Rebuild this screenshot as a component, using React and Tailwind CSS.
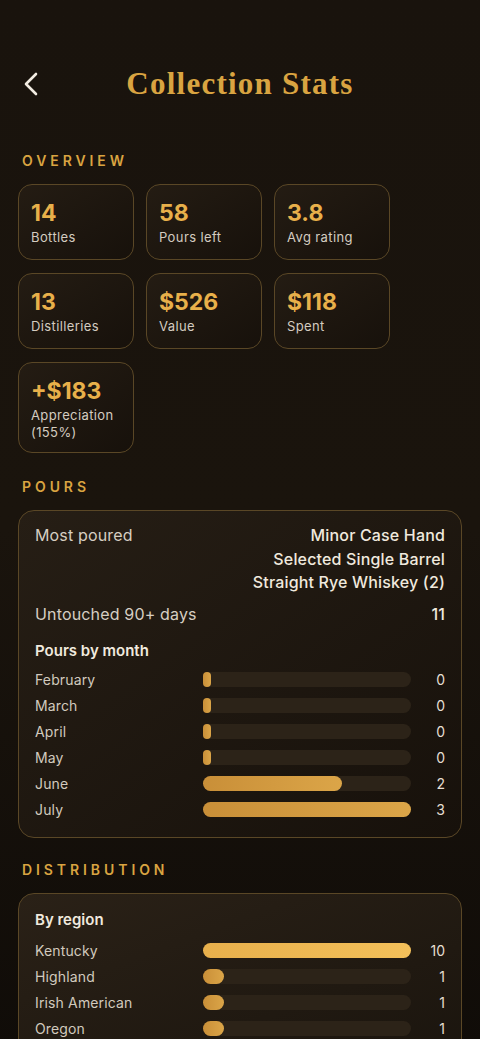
const overview = [
  { v: "14", l: "Bottles" },
  { v: "58", l: "Pours left" },
  { v: "3.8", l: "Avg rating" },
  { v: "13", l: "Distilleries" },
  { v: "$526", l: "Value" },
  { v: "$118", l: "Spent" },
  { v: "+$183", l: "Appreciation (155%)" },
];

const months = [
  { l: "February", n: 0 },
  { l: "March", n: 0 },
  { l: "April", n: 0 },
  { l: "May", n: 0 },
  { l: "June", n: 2 },
  { l: "July", n: 3 },
];

const regions = [
  { l: "Kentucky", n: 10 },
  { l: "Highland", n: 1 },
  { l: "Irish American", n: 1 },
  { l: "Oregon", n: 1 },
];

const SectionTitle = ({ children }) => (
  <div className="px-[22px] text-[14px] font-semibold tracking-[0.28em] text-[#d9a441]">{children}</div>
);

const BarRow = ({ label, n, max, bright }) => {
  const pct = Math.max((n / max) * 100, n === 0 ? 4 : 0);
  return (
    <div className="flex h-[26px] items-center">
      <div className="w-[168px] text-[14px] tracking-[0.01em] text-[#d2cabe]">{label}</div>
      <div className="h-[15px] w-[208px] rounded-full bg-[#2c2318]">
        <div
          className={
            bright
              ? "h-full rounded-full bg-gradient-to-r from-[#e8b04c] to-[#f3c05a]"
              : "h-full rounded-full bg-gradient-to-r from-[#c98f38] to-[#dba548]"
          }
          style={{ width: pct + "%" }}
        />
      </div>
      <div className="flex-1 text-right text-[14px] text-[#e6ded2]">{n}</div>
    </div>
  );
};

export default function App() {
  return (
    <div
      className="min-h-[1039px] w-[480px] overflow-hidden bg-gradient-to-b from-[#19130d] via-[#1a140d] to-[#100c08] text-white"
      style={{ fontFamily: "Inter, 'Noto Sans', sans-serif" }}
    >
      <div className="relative flex h-[108px] items-center justify-center pt-[60px]">
        <svg
          className="absolute left-[22px] top-[70px]"
          width="20"
          height="28"
          viewBox="0 0 20 28"
          fill="none"
          stroke="#f2ece2"
          strokeWidth="2.6"
          strokeLinecap="round"
          strokeLinejoin="round"
        >
          <path d="M14 4 L4 14 L14 24" />
        </svg>
        <h1
          className="text-[31px] font-bold leading-[48px] tracking-[0.04em] text-[#d9a441]"
          style={{ fontFamily: "'Liberation Serif', 'DejaVu Serif', serif" }}
        >
          Collection Stats
        </h1>
      </div>

      <div className="mt-[42px]">
        <SectionTitle>OVERVIEW</SectionTitle>
        <div className="mt-[13px] grid w-[408px] grid-cols-3 gap-x-[12px] gap-y-[13px] px-[18px]">
          {overview.map((o) => (
            <div
              key={o.l}
              className="min-h-[76px] rounded-[14px] border border-[#5a4726] bg-gradient-to-br from-[#241c13] to-[#17110b] px-[12px] pt-[14px] pb-[11px]"
            >
              <div className="text-[23px] font-bold leading-[28px] text-[#e8b04a]">{o.v}</div>
              <div className="mt-[2px] w-[96px] text-[13px] leading-[17px] tracking-[0.03em] text-[#d4ccc0]">{o.l}</div>
            </div>
          ))}
        </div>
      </div>

      <div className="mt-[23px]">
        <SectionTitle>POURS</SectionTitle>
        <div className="mx-[18px] mt-[13px] rounded-[16px] border border-[#5a4726] bg-gradient-to-br from-[#261e15] to-[#17110b] px-[16px] pt-[13px] pb-[14px]">
          <div className="flex justify-between text-[16px] leading-[23.5px] tracking-[0.01em]">
            <div className="text-[#d6cec2]">Most poured</div>
            <div className="text-right font-medium text-[#f0e9de]">
              Minor Case Hand
              <br />
              Selected Single Barrel
              <br />
              Straight Rye Whiskey (2)
            </div>
          </div>
          <div className="mt-[8px] flex justify-between text-[16px] leading-[23px] tracking-[0.01em]">
            <div className="text-[#d6cec2]">Untouched 90+ days</div>
            <div className="font-medium text-[#f0e9de]">11</div>
          </div>
          <div className="mt-[15px] text-[15px] font-semibold leading-[20px] text-[#f0e9de]">Pours by month</div>
          <div className="mt-[6px]">
            {months.map((m) => (
              <BarRow key={m.l} label={m.l} n={m.n} max={3} />
            ))}
          </div>
        </div>
      </div>

      <div className="mt-[21px]">
        <SectionTitle>DISTRIBUTION</SectionTitle>
        <div className="mx-[18px] mt-[13px] rounded-[16px] border border-[#5a4726] bg-gradient-to-br from-[#2a2117] to-[#1b150e] px-[16px] pt-[15px] pb-[14px]">
          <div className="text-[15px] font-semibold leading-[22px] text-[#f0e9de]">By region</div>
          <div className="mt-[7px]">
            {regions.map((r, i) => (
              <BarRow key={r.l} label={r.l} n={r.n} max={10} bright={i === 0} />
            ))}
          </div>
        </div>
      </div>
    </div>
  );
}
